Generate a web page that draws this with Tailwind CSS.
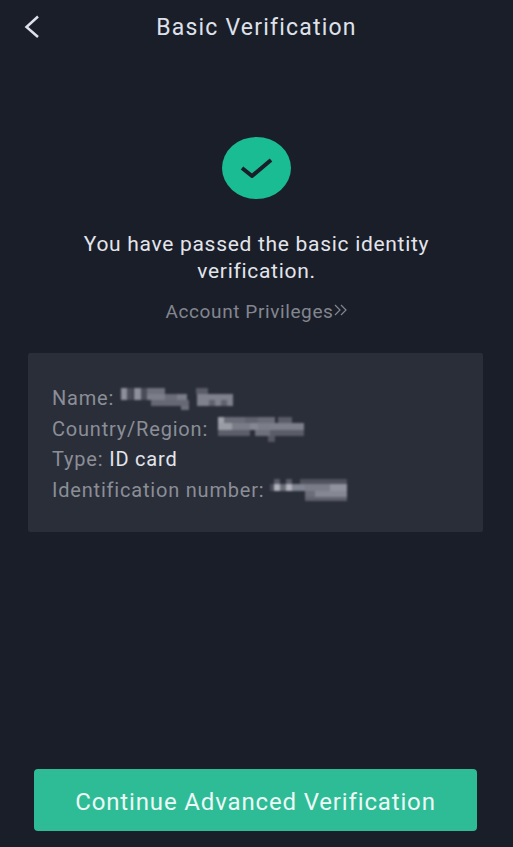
<!DOCTYPE html>
<html lang="en">
  <head>
    <meta charset="UTF-8" />
    <meta name="viewport" content="width=device-width, initial-scale=1.0" />
    <title>Basic Verification</title>
    <script src="https://cdn.jsdelivr.net/npm/@tailwindcss/browser@4"></script>
  </head>
  <body class="bg-[#1a1e29] font-['Roboto',sans-serif] h-[847px] overflow-hidden">
    <div class="flex flex-col h-[847px]">
      <!-- Header -->
      <div class="relative h-[56px] pt-[1px] flex items-center justify-center">
        <button class="absolute left-[24px] top-[15px] text-[#dfe1ea]">
          <svg width="16" height="24" viewBox="0 0 16 24" fill="none" stroke="currentColor" stroke-width="2.5">
            <path d="M14 1.5 L2.5 12 L14 22" />
          </svg>
        </button>
        <h1 class="text-[23px] font-[450] tracking-[1.2px] text-[#dfe1ea]">Basic Verification</h1>
      </div>

      <!-- Status -->
      <div class="flex flex-col items-center mt-[81px]">
        <div class="w-[69px] h-[62px] rounded-[50%] bg-[#1abc94] flex items-center justify-center">
          <svg width="36" height="24" viewBox="0 0 36 24" fill="none" stroke="#1a1e29" stroke-width="4" stroke-linejoin="round">
            <path d="M3 12 L13 20 L32 4" />
          </svg>
        </div>
        <p class="mt-[32px] w-[380px] text-center text-[21px] font-[450] leading-[27px] tracking-[0.7px] text-[#e3e5ec]">
          You have passed the basic identity verification.
        </p>
        <a class="mt-[15px] text-[19px] font-[450] leading-[24px] tracking-[0.6px] text-[#83868f] flex items-center gap-[1px]">
          Account Privileges
          <svg width="13" height="12" viewBox="0 0 13 12" fill="none" stroke="#83868f" stroke-width="1.2" class="mb-[4px]">
            <path d="M1 1 L6 6 L1 11 M7 1 L12 6 L7 11" />
          </svg>
        </a>
      </div>

      <!-- Details -->
      <div class="ml-[28px] mr-[30px] mt-[29px] h-[179px] bg-[#2a2e39] rounded-[2px] px-[24px] pt-[30px] text-[20px] font-[450] leading-[30.5px] tracking-[0.8px] text-[#8b8e97]">
        <div class="flex items-center">
          Name:
          <svg class="ml-[7px] blur-[1px]" width="112" height="24" viewBox="0 0 112 24" shape-rendering="crispEdges">
            <rect x="0" y="2" width="6" height="12" fill="#8d909a" />
            <rect x="6" y="2" width="6" height="12" fill="#4a4d58" />
            <rect x="13" y="2" width="7" height="12" fill="#8d909a" />
            <rect x="20" y="2" width="6" height="12" fill="#4a4d58" />
            <rect x="26" y="2" width="18" height="6" fill="#6f727c" />
            <rect x="26" y="8" width="18" height="6" fill="#7c7f89" />
            <rect x="44" y="8" width="12" height="6" fill="#6a6d77" />
            <rect x="56" y="8" width="10" height="6" fill="#7a7d87" />
            <rect x="30" y="14" width="38" height="6" fill="#666973" />
            <rect x="60" y="20" width="8" height="4" fill="#6d707a" />
            <rect x="75" y="2" width="12" height="6" fill="#5a5d68" />
            <rect x="76" y="8" width="36" height="12" fill="#7f828c" />
            <rect x="88" y="14" width="6" height="6" fill="#5f626c" />
            <rect x="100" y="14" width="6" height="6" fill="#5f626c" />
          </svg>
        </div>
        <div class="flex items-center">
          Country/Region:
          <svg class="ml-[10px] blur-[1px]" width="86" height="26" viewBox="0 0 86 26" shape-rendering="crispEdges">
            <rect x="0" y="1" width="6" height="6" fill="#a0a2ab" />
            <rect x="6" y="1" width="21" height="6" fill="#6a6d77" />
            <rect x="27" y="1" width="13" height="6" fill="#60636d" />
            <rect x="40" y="1" width="17" height="6" fill="#6a6d77" />
            <rect x="60" y="1" width="14" height="6" fill="#5a5d68" />
            <rect x="0" y="7" width="14" height="7" fill="#9a9ca5" />
            <rect x="14" y="7" width="18" height="7" fill="#7a7d87" />
            <rect x="32" y="7" width="8" height="7" fill="#858892" />
            <rect x="40" y="7" width="12" height="7" fill="#7b7e88" />
            <rect x="52" y="7" width="34" height="7" fill="#7d808a" />
            <rect x="0" y="14" width="32" height="6" fill="#5c5f69" />
            <rect x="37" y="14" width="15" height="6" fill="#6e717b" />
            <rect x="52" y="14" width="34" height="6" fill="#5a5d68" />
            <rect x="50" y="20" width="7" height="6" fill="#555862" />
          </svg>
        </div>
        <div>Type: <span class="text-[#e3e5ec]">ID card</span></div>
        <div class="flex items-center">
          Identification number:
          <svg class="ml-[6px] blur-[1px]" width="77" height="24" viewBox="0 0 77 24" shape-rendering="crispEdges">
            <rect x="4" y="1" width="6" height="5" fill="#5a5d68" />
            <rect x="16" y="1" width="6" height="5" fill="#5a5d68" />
            <rect x="30" y="1" width="47" height="5" fill="#4f525d" />
            <rect x="0" y="6" width="4" height="7" fill="#4a4d58" />
            <rect x="4" y="6" width="6" height="7" fill="#b0b2bb" />
            <rect x="10" y="6" width="6" height="7" fill="#6a6d77" />
            <rect x="16" y="6" width="6" height="7" fill="#b0b2bb" />
            <rect x="22" y="6" width="13" height="7" fill="#808390" />
            <rect x="35" y="6" width="25" height="7" fill="#7a7d87" />
            <rect x="60" y="6" width="17" height="7" fill="#90939d" />
            <rect x="35" y="13" width="10" height="6" fill="#6b6e78" />
            <rect x="45" y="13" width="32" height="6" fill="#858892" />
            <rect x="35" y="19" width="42" height="4" fill="#5f626c" />
          </svg>
        </div>
      </div>

      <!-- Button -->
      <div class="mt-auto ml-[34px] mr-[36px] mb-[16px]">
        <button class="w-full h-[62px] pt-[3px] rounded-[4px] bg-[#2ebc96] text-[#ecf8f5] text-[24px] font-[450] tracking-[0.85px]">
          Continue Advanced Verification
        </button>
      </div>
    </div>
  </body>
</html>
